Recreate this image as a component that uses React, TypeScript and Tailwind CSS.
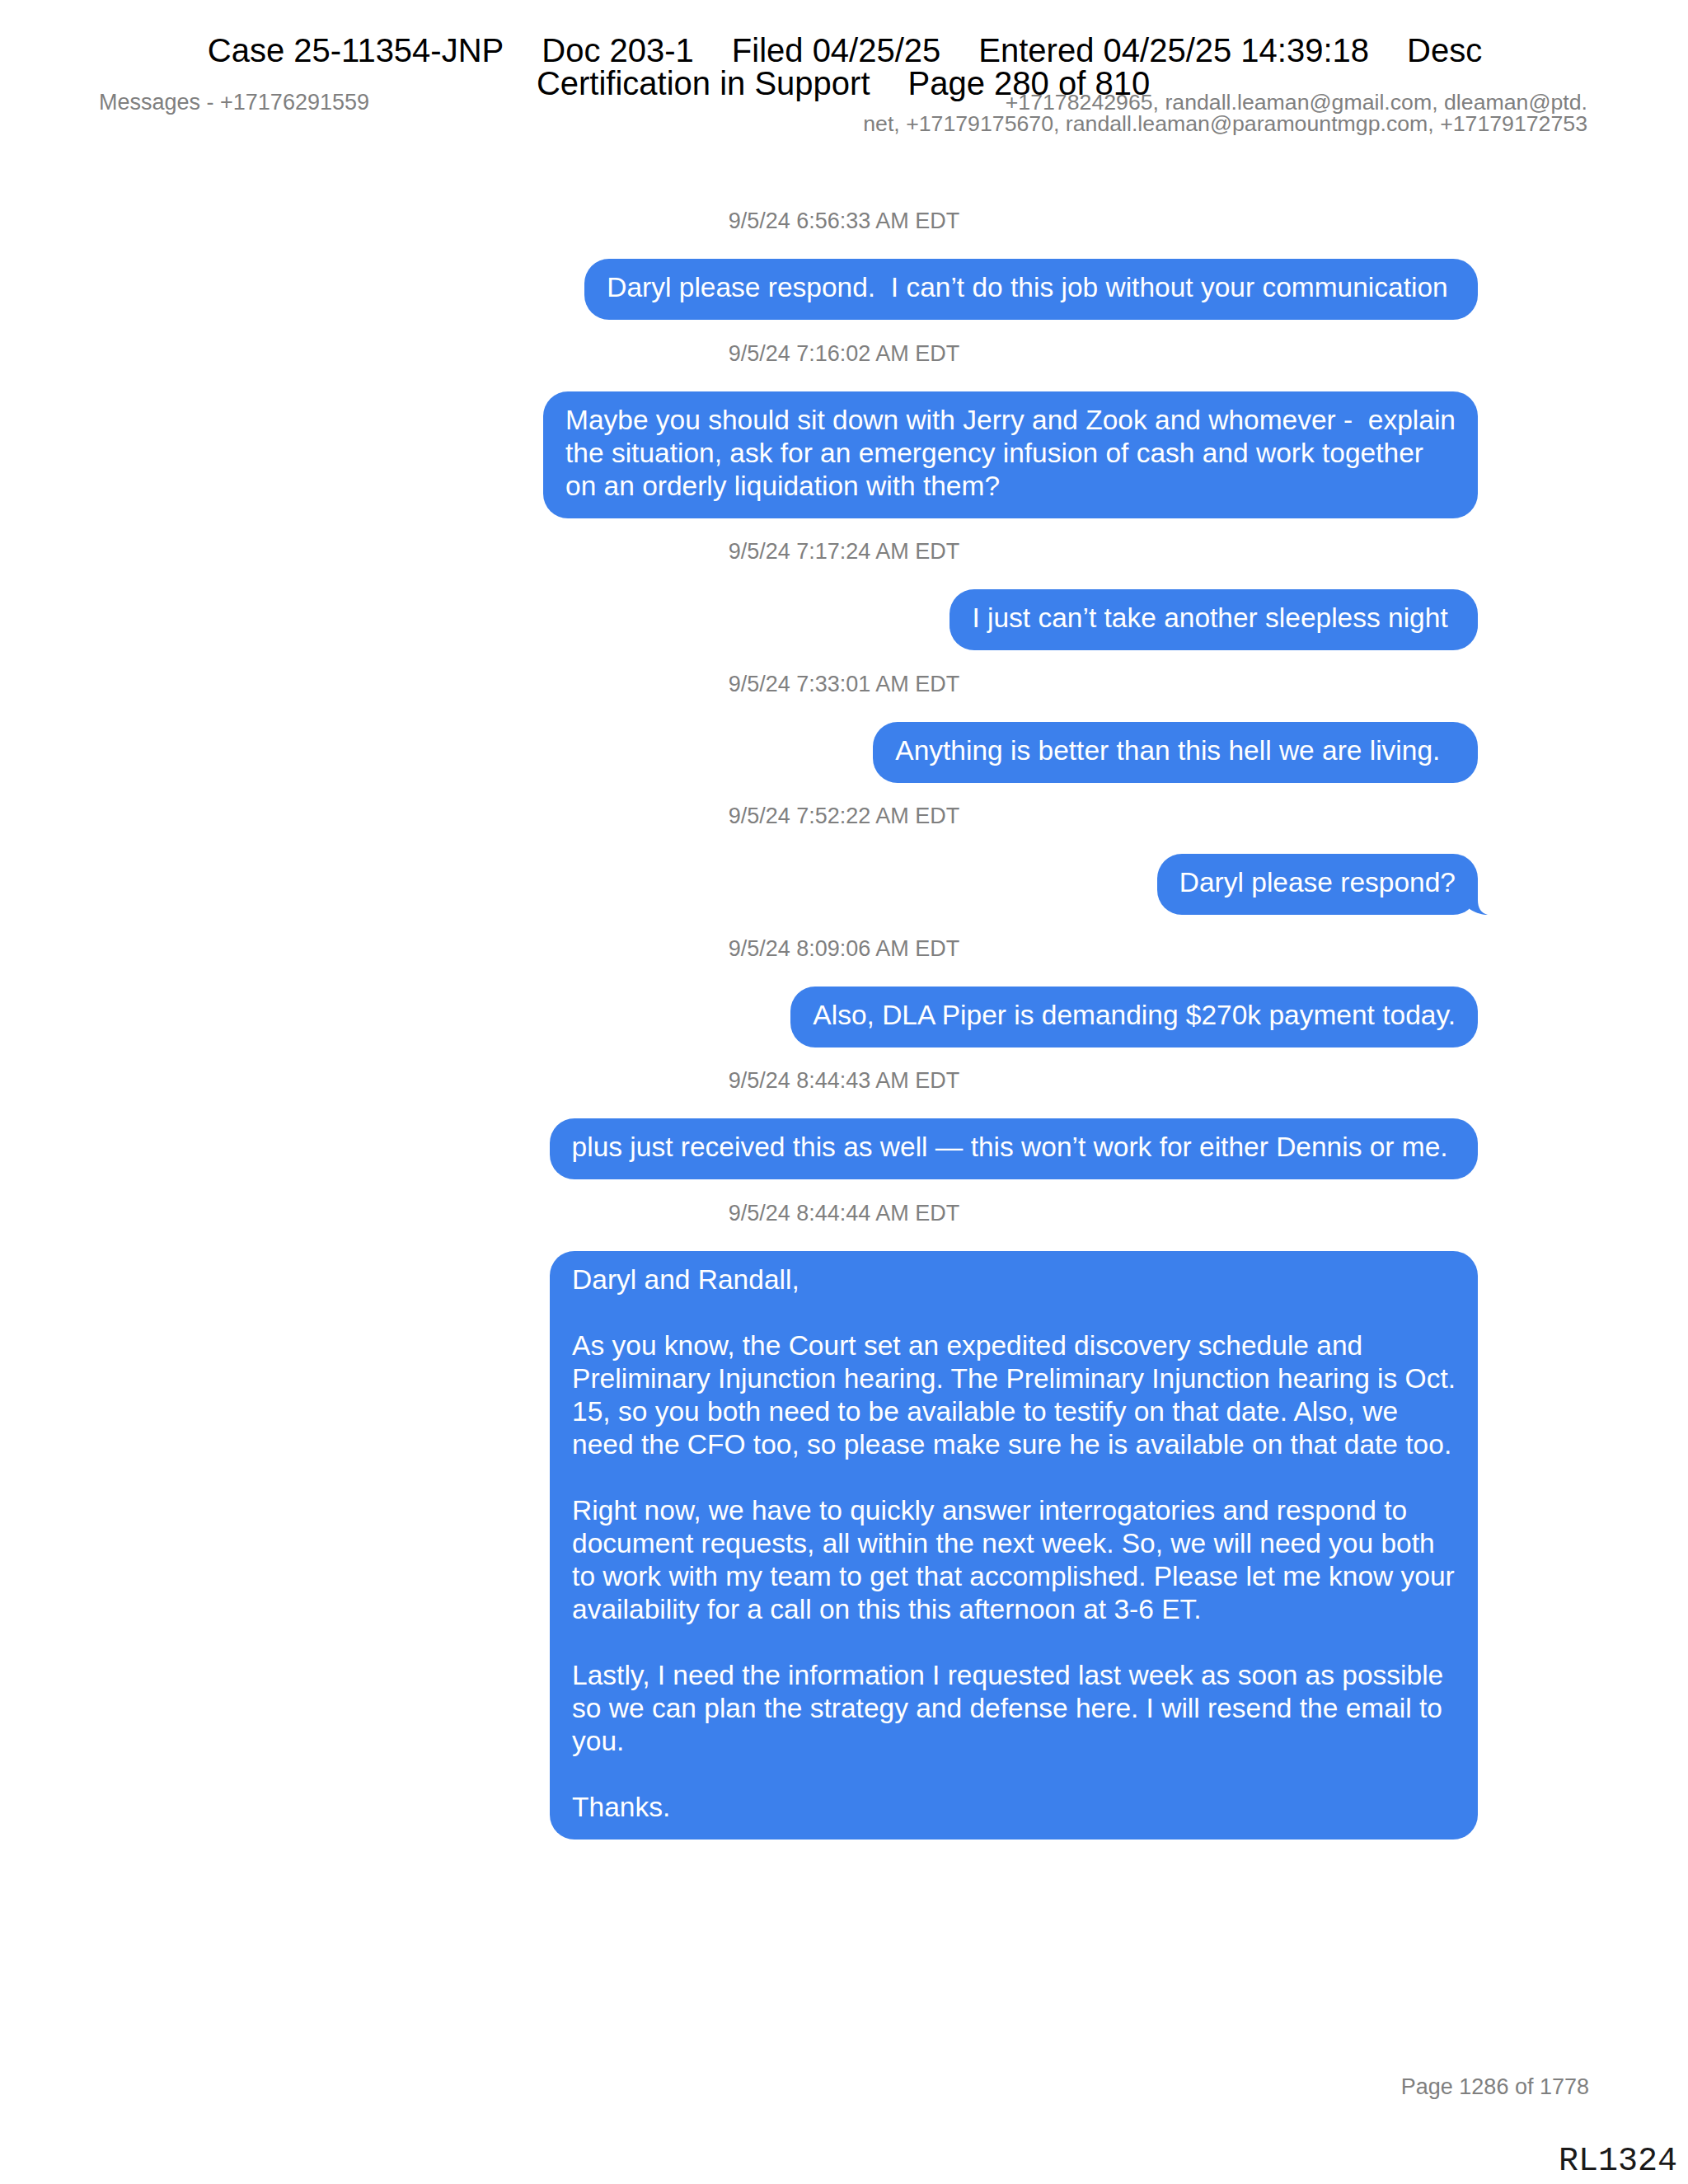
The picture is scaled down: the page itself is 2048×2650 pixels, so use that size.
import React from "react";

type Item = { ts: string; lines: string[]; tail?: boolean };

const items: Item[] = [
  { ts: "9/5/24 6:56:33 AM EDT", lines: ["Daryl please respond.  I can\u2019t do this job without your communication "] },
  {
    ts: "9/5/24 7:16:02 AM EDT",
    lines: [
      "Maybe you should sit down with Jerry and Zook and whomever -  explain",
      "the situation, ask for an emergency infusion of cash and work together",
      "on an orderly liquidation with them?",
    ],
  },
  { ts: "9/5/24 7:17:24 AM EDT", lines: ["I just can\u2019t take another sleepless night "] },
  { ts: "9/5/24 7:33:01 AM EDT", lines: ["Anything is better than this hell we are living.  "] },
  { ts: "9/5/24 7:52:22 AM EDT", lines: ["Daryl please respond?"], tail: true },
  { ts: "9/5/24 8:09:06 AM EDT", lines: ["Also, DLA Piper is demanding $270k payment today."] },
  { ts: "9/5/24 8:44:43 AM EDT", lines: ["plus just received this as well \u2014 this won\u2019t work for either Dennis or me. "] },
  {
    ts: "9/5/24 8:44:44 AM EDT",
    lines: [
      "Daryl and Randall,",
      "",
      "As you know, the Court set an expedited discovery schedule and",
      "Preliminary Injunction hearing. The Preliminary Injunction hearing is Oct.",
      "15, so you both need to be available to testify on that date. Also, we",
      "need the CFO too, so please make sure he is available on that date too.",
      "",
      "Right now, we have to quickly answer interrogatories and respond to",
      "document requests, all within the next week. So, we will need you both",
      "to work with my team to get that accomplished. Please let me know your",
      "availability for a call on this this afternoon at 3-6 ET.",
      "",
      "Lastly, I need the information I requested last week as soon as possible",
      "so we can plan the strategy and defense here. I will resend the email to",
      "you.",
      "",
      "Thanks.",
    ],
  },
];

function Tail() {
  return (
    <svg
      className="absolute right-[-12px] bottom-0"
      width="24"
      height="32"
      viewBox="0 0 24 32"
      fill="#3c80ec"
    >
      <path d="M0 2 L12 2 L12 14 C12 24 16 30 24 32 C18 32 11 30.5 2 25 Z" />
    </svg>
  );
}

export default function App() {
  return (
    <div className="relative flex h-[2650px] w-[2048px] flex-col overflow-hidden bg-white font-['Liberation_Sans',Arial,sans-serif]">
      {/* Court filing stamp overlay */}
      <div className="absolute left-0 right-0 top-[41px] z-10 flex flex-col items-center text-[40px] leading-[40px] text-black">
        <div className="flex gap-[46px] pl-[2px]">
          <span>Case 25-11354-JNP</span>
          <span>Doc 203-1</span>
          <span>Filed 04/25/25</span>
          <span>Entered 04/25/25 14:39:18</span>
          <span>Desc</span>
        </div>
        <div className="flex gap-[46px] pr-[2px]">
          <span>Certification in Support</span>
          <span>Page 280 of 810</span>
        </div>
      </div>

      {/* Header */}
      <div className="flex items-start justify-between pl-[120px] pr-[122px] pt-[111px] text-[27px] leading-[26px] text-[#7f7f7f]">
        <div>Messages - +17176291559</div>
        <div className="text-right text-[26.7px]">
          <div>+17178242965, randall.leaman@gmail.com, dleaman@ptd.</div>
          <div>net, +17179175670, randall.leaman@paramountmgp.com, +17179172753</div>
        </div>
      </div>

      {/* Conversation */}
      <div className="mt-[90px] flex flex-col">
        {items.map((it, i) => (
          <React.Fragment key={i}>
            <div
              className={
                (i === 0 ? "" : "mt-[25.5px] ") +
                "self-center text-[27px] leading-[30px] text-[#7f7f7f]"
              }
            >
              {it.ts}
            </div>
            <div className="relative mr-[255px] mt-[31px] self-end">
              {it.tail ? <Tail /> : null}
              <div className="relative rounded-[30px] bg-[#3c80ec] px-[27px] pb-[19px] pt-[15px] text-[33.5px] leading-[40px] text-white">
                {it.lines.map((l, j) => (
                  <div key={j} className="h-[40px] whitespace-pre">
                    {l === "" ? "\u00a0" : l}
                  </div>
                ))}
              </div>
            </div>
          </React.Fragment>
        ))}
      </div>

      {/* Footer */}
      <div className="mt-auto flex flex-col items-end pb-[7px]">
        <div className="pr-[120px] text-[27px] leading-[30px] text-[#7f7f7f]">Page 1286 of 1778</div>
        <div className="mt-[56px] pr-[13px] font-['Liberation_Mono','Courier_New',monospace] text-[40px] leading-[40px] text-[#1a1a1a]">
          RL1324
        </div>
      </div>
    </div>
  );
}
